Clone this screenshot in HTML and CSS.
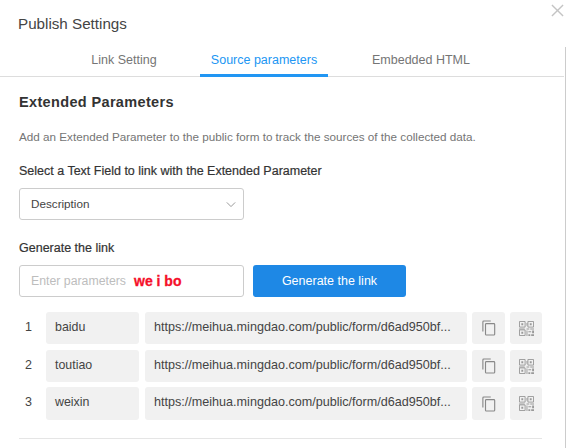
FILE: index.html
```html
<!DOCTYPE html>
<html lang="en">
<head>
    <meta charset="UTF-8">
    <title>Publish Settings</title>
    <link rel="stylesheet" href="styles.css">
</head>
<body>
    <div class="dialog">
        <svg class="close" viewBox="0 0 14 14" xmlns="http://www.w3.org/2000/svg">
            <path d="M1 1l12 12M13 1L1 13"/>
        </svg>
        <h1 class="title">Publish Settings</h1>
        <div class="panel">
            <div class="tabs">
                <a class="tab tab-link">Link Setting</a>
                <a class="tab tab-source active">Source parameters</a>
                <a class="tab tab-html">Embedded HTML</a>
            </div>
            <div class="content">
                <h2 class="heading">Extended Parameters</h2>
                <p class="desc">Add an Extended Parameter to the public form to track the sources of the collected data.</p>
                <div class="label label-select">Select a Text Field to link with the Extended Parameter</div>
                <div class="select">
                    <span>Description</span>
                    <svg class="arrow" viewBox="0 0 12 8" xmlns="http://www.w3.org/2000/svg">
                        <path d="M1 1.5l5 5 5-5"/>
                    </svg>
                </div>
                <div class="label label-generate">Generate the link</div>
                <div class="generate">
                    <div class="input">
                        <span class="placeholder">Enter parameters</span>
                        <span class="typed">we i bo</span>
                    </div>
                    <button class="btn">Generate the link</button>
                </div>
                <div class="rows">
                    <div class="row">
                        <span class="num">1</span>
                        <span class="cell name">baidu</span>
                        <span class="cell url">https://meihua.mingdao.com/public/form/d6ad950bf...</span>
                        <span class="cell icon-btn">
                            <svg class="copy" viewBox="0 0 16 18" xmlns="http://www.w3.org/2000/svg"><path d="M1 13V2a1 1 0 0 1 1-1h8"/><rect x="4" y="4" width="10.5" height="13" rx="1"/></svg>
                        </span>
                        <span class="cell icon-btn">
                            <svg class="qr" viewBox="0 0 16 16" xmlns="http://www.w3.org/2000/svg"><path d="M.5.5h6v6h-6zM9.5.5h6v6h-6zM.5 9.5h6v6h-6z"/><path class="fill" d="M2.5 2.5h2v2h-2zM11.5 2.5h2v2h-2zM2.5 11.5h2v2h-2zM8 2h1v3H8zM8 8h3v1H8zM12 8h4v1h-4zM0 8h6v1H0zM8 10h1v6H8zM10 11h3v1h-3zM14 10h2v3h-2zM10 14h2v2h-2zM13 14h3v2h-3z"/></svg>
                        </span>
                    </div>
                    <div class="row">
                        <span class="num">2</span>
                        <span class="cell name">toutiao</span>
                        <span class="cell url">https://meihua.mingdao.com/public/form/d6ad950bf...</span>
                        <span class="cell icon-btn">
                            <svg class="copy" viewBox="0 0 16 18" xmlns="http://www.w3.org/2000/svg"><path d="M1 13V2a1 1 0 0 1 1-1h8"/><rect x="4" y="4" width="10.5" height="13" rx="1"/></svg>
                        </span>
                        <span class="cell icon-btn">
                            <svg class="qr" viewBox="0 0 16 16" xmlns="http://www.w3.org/2000/svg"><path d="M.5.5h6v6h-6zM9.5.5h6v6h-6zM.5 9.5h6v6h-6z"/><path class="fill" d="M2.5 2.5h2v2h-2zM11.5 2.5h2v2h-2zM2.5 11.5h2v2h-2zM8 2h1v3H8zM8 8h3v1H8zM12 8h4v1h-4zM0 8h6v1H0zM8 10h1v6H8zM10 11h3v1h-3zM14 10h2v3h-2zM10 14h2v2h-2zM13 14h3v2h-3z"/></svg>
                        </span>
                    </div>
                    <div class="row row-last">
                        <span class="num">3</span>
                        <span class="cell name">weixin</span>
                        <span class="cell url">https://meihua.mingdao.com/public/form/d6ad950bf...</span>
                        <span class="cell icon-btn">
                            <svg class="copy" viewBox="0 0 16 18" xmlns="http://www.w3.org/2000/svg"><path d="M1 13V2a1 1 0 0 1 1-1h8"/><rect x="4" y="4" width="10.5" height="13" rx="1"/></svg>
                        </span>
                        <span class="cell icon-btn">
                            <svg class="qr" viewBox="0 0 16 16" xmlns="http://www.w3.org/2000/svg"><path d="M.5.5h6v6h-6zM9.5.5h6v6h-6zM.5 9.5h6v6h-6z"/><path class="fill" d="M2.5 2.5h2v2h-2zM11.5 2.5h2v2h-2zM2.5 11.5h2v2h-2zM8 2h1v3H8zM8 8h3v1H8zM12 8h4v1h-4zM0 8h6v1H0zM8 10h1v6H8zM10 11h3v1h-3zM14 10h2v3h-2zM10 14h2v2h-2zM13 14h3v2h-3z"/></svg>
                        </span>
                    </div>
                </div>
                <div class="divider"></div>
            </div>
        </div>
    </div>
</body>
</html>
```
FILE: styles.css
```css
* {
    box-sizing: border-box;
}
html, body {
    margin: 0;
    height: 100%;
    overflow: hidden;
}
body {
    font-family: "Liberation Sans", Arial, sans-serif;
    background-color: #fff;
    color: #333;
}
.dialog {
    position: relative;
    width: 566px;
    height: 448px;
    overflow: hidden;
}
.close {
    position: absolute;
    top: 4px;
    left: 551px;
    width: 13px;
    height: 13px;
    fill: none;
    stroke: #c4c4c4;
    stroke-width: 1.5;
}
.title {
    margin: 0;
    padding: 15px 0 0 18px;
    height: 47px;
    font-size: 15.2px;
    line-height: 18px;
    font-weight: normal;
    color: #444;
}
.panel {
    width: 566px;
    height: 401px;
    border-right: 1px solid #ccc;
}
.tabs {
    display: flex;
    height: 30px;
    width: 564px;
    padding-left: 91px;
    border-bottom: 1px solid #ddd;
}
.tab {
    height: 30px;
    font-size: 12.5px;
    line-height: 27px;
    text-align: center;
    color: #757575;
}
.tab-link {
    width: 66px;
}
.tab-source {
    width: 128px;
    margin-left: 43px;
}
.tab-html {
    width: 98px;
    margin-left: 44px;
}
.tab.active {
    color: #2196f3;
    border-bottom: 3px solid #2196f3;
}
.content {
    padding: 0 0 0 19px;
}
.heading {
    margin: 0;
    padding-top: 17px;
    font-size: 14.5px;
    line-height: 17px;
    font-weight: bold;
    color: #333;
    letter-spacing: 0.35px;
}
.desc {
    margin: 18px 0 0;
    font-size: 11.7px;
    line-height: 16px;
    color: #757575;
}
.label {
    font-size: 12.5px;
    line-height: 14px;
    color: #333;
}
.label-select {
    margin-top: 19px;
    -webkit-text-stroke: 0.2px #333;
}
.label-generate {
    margin-top: 21px;
    -webkit-text-stroke: 0.2px #333;
}
.select {
    display: flex;
    align-items: center;
    justify-content: space-between;
    width: 225px;
    height: 32px;
    margin-top: 10px;
    padding: 0 7px 0 11px;
    border: 1px solid #ccc;
    border-radius: 3px;
    font-size: 11.7px;
    color: #444;
}
.select span {
    margin-top: -1px;
}
.arrow {
    width: 10px;
    height: 7px;
    fill: none;
    stroke: #999;
    stroke-width: 1.2;
}
.generate {
    display: flex;
    gap: 9px;
    margin-top: 10px;
}
.input {
    display: flex;
    align-items: center;
    width: 225px;
    height: 32px;
    padding: 0 11px;
    border: 1px solid #ccc;
    border-radius: 3px;
    font-size: 12.3px;
}
.placeholder {
    color: #bdbdbd;
}
.typed {
    margin-left: 8px;
    font-size: 14px;
    font-weight: bold;
    color: #f5102a;
    -webkit-text-stroke: 0.3px #f5102a;
    white-space: pre;
}
.btn {
    width: 153px;
    height: 32px;
    padding: 0;
    border: none;
    border-radius: 3px;
    background-color: #1e88e5;
    color: #fff;
    font-family: inherit;
    font-size: 12.5px;
}
.rows {
    margin-top: 15px;
}
.row {
    display: flex;
    align-items: stretch;
    width: 523px;
    height: 32px;
    margin-bottom: 6px;
    font-size: 12.4px;
    line-height: 31px;
    color: #444;
}
.row-last {
    height: 33px;
    margin-top: -1px;
    margin-bottom: 0;
}
.num {
    width: 27px;
    padding-left: 6px;
    font-size: 12.5px;
}
.cell {
    display: block;
    background-color: #f1f1f1;
    border-radius: 3px;
}
.name {
    width: 93px;
    padding-left: 9px;
}
.url {
    width: 322px;
    margin-left: 6px;
    padding: 0 9px;
    font-size: 12.6px;
    white-space: nowrap;
}
.icon-btn {
    display: flex;
    align-items: center;
    justify-content: center;
    width: 33px;
    margin-left: 5px;
}
.icon-btn + .icon-btn {
    width: 32px;
}
.copy {
    width: 14px;
    height: 16px;
    fill: none;
    stroke: #888;
    stroke-width: 1.3;
}
.qr {
    width: 15px;
    height: 15px;
    fill: none;
    stroke: #999;
    stroke-width: 1;
}
.qr .fill {
    fill: #999;
    stroke: none;
}
.divider {
    width: 523px;
    height: 1px;
    margin-top: 18px;
    background-color: #e5e5e5;
}
```
